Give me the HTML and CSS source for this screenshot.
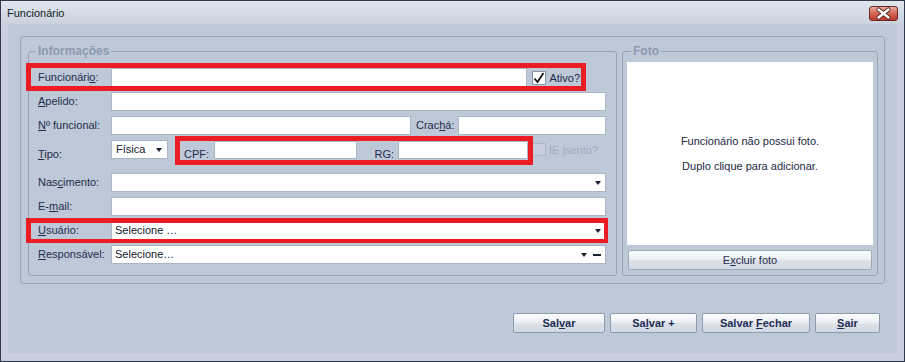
FILE: index.html
```html
<!DOCTYPE html>
<html lang="pt-BR">
<head>
  <meta charset="UTF-8">
  <meta name="viewport" content="width=device-width, initial-scale=1.0">
  <title>Funcionário</title>
  <link rel="stylesheet" href="styles.css">
</head>
<body>
  <div class="window">
    <div class="titlebar">
      <span class="title">Funcionário</span>
      <div class="close">
        <svg width="29" height="15" viewBox="0 0 29 15">
          <defs>
            <linearGradient id="closeGrad" x1="0" y1="0" x2="0" y2="1">
              <stop offset="0" stop-color="#eab3a6"/>
              <stop offset="0.45" stop-color="#d66a58"/>
              <stop offset="1" stop-color="#b9382b"/>
            </linearGradient>
          </defs>
          <rect x="0.5" y="0.5" width="28" height="14" rx="2.5" fill="url(#closeGrad)" stroke="#6e2a26"/>
          <path d="M9.5 3.5 L19.5 11.5 M19.5 3.5 L9.5 11.5" stroke="#5a2420" stroke-width="4.2" stroke-linecap="round"/>
          <path d="M9.5 3.5 L19.5 11.5 M19.5 3.5 L9.5 11.5" stroke="#ffffff" stroke-width="2.4" stroke-linecap="round"/>
        </svg>
      </div>
    </div>

    <div class="client">
      <div class="panel">
        <fieldset class="group info">
          <legend>Informações</legend>
          <div class="rows">
            <div class="row">
              <div class="hl hl-func">
                <span class="lbl">Funcionári<u>o</u>:</span>
                <div class="txt"></div>
                <span class="check on">
                  <svg width="12" height="12" viewBox="0 0 12 12"><path d="M1.5 6.5 L4.5 10 L10.5 1" fill="none" stroke="#111" stroke-width="1.8"/></svg>
                </span>
                <span class="check-text">Ativo?</span>
              </div>
            </div>

            <div class="row">
              <span class="lbl"><u>A</u>pelido:</span>
              <div class="txt"></div>
            </div>

            <div class="row">
              <span class="lbl"><u>N</u>º funcional:</span>
              <div class="txt w-func"></div>
              <span class="lbl lbl-cracha">Crac<u>h</u>á:</span>
              <div class="txt"></div>
            </div>

            <div class="row row-tipo">
              <span class="lbl lbl-bottom"><u>T</u>ipo:</span>
              <div class="txt combo w-tipo">Física<span class="arrow"></span></div>
              <div class="hl cpf">
                <span class="lbl lbl-bottom lbl-cpf">CPF:</span>
                <div class="txt w-cpf"></div>
                <span class="lbl lbl-bottom lbl-rg">RG:</span>
                <div class="txt"></div>
              </div>
              <span class="check off"></span>
              <span class="check-text disabled">IE <u>i</u>sento?</span>
            </div>

            <div class="row">
              <span class="lbl">Nas<u>c</u>imento:</span>
              <div class="txt combo"><span class="arrow"></span></div>
            </div>

            <div class="row">
              <span class="lbl">E-<u>m</u>ail:</span>
              <div class="txt"></div>
            </div>

            <div class="row">
              <div class="hl hl-user">
                <span class="lbl"><u>U</u>suário:</span>
                <div class="txt combo">Selecione …<span class="arrow"></span></div>
              </div>
            </div>

            <div class="row">
              <span class="lbl"><u>R</u>esponsável:</span>
              <div class="txt combo">Selecione…<span class="arrow"></span><span class="minus"></span></div>
            </div>
          </div>
        </fieldset>

        <fieldset class="group foto">
          <legend>Foto</legend>
          <div class="photo">
            <p>Funcionário não possui foto.</p>
            <p>Duplo clique para adicionar.</p>
          </div>
          <div class="btn btn-photo"><span>E<u>x</u>cluir foto</span></div>
        </fieldset>
      </div>

      <div class="actions">
        <div class="btn btn-main w-salvar"><span>Sal<u>v</u>ar</span></div>
        <div class="btn btn-main w-mais"><span>Sa<u>l</u>var +</span></div>
        <div class="btn btn-main w-fechar"><span>Salvar <u>F</u>echar</span></div>
        <div class="btn btn-main w-sair"><span><u>S</u>air</span></div>
      </div>
    </div>
  </div>
</body>
</html>
```

FILE: styles.css
```css
body {
  margin: 0;
  font-family: "Liberation Sans", Arial, sans-serif;
  font-size: 11px;
  color: #1e2b4a;
}
.window {
  width: 905px;
  height: 362px;
  box-sizing: border-box;
  border: 1px solid #2e3a4c;
  background: linear-gradient(#e1e6ed, #c8d1dd 24px, #c7d0dc);
  display: flex;
  flex-direction: column;
}
.titlebar {
  height: 23px;
  display: flex;
  align-items: center;
  padding-left: 6px;
  flex: none;
}
.title {
  color: #141c28;
  flex: 1;
}
.close {
  align-self: flex-start;
  margin-top: 5px;
  margin-right: 6px;
  height: 15px;
}
.client {
  margin: 0 7px 8px 7px;
  flex: 1;
  background: #bec9d8;
  padding: 12px;
}
.panel {
  height: 248px;
  box-sizing: border-box;
  border: 1px solid #9aa6b8;
  border-radius: 3px;
  padding: 7px 6px 7px 7px;
  display: flex;
  gap: 5px;
}
.group {
  margin: 0;
  padding: 0;
  min-inline-size: 0;
  border: 1px solid #98a4b6;
  border-radius: 3px;
  height: 232px;
  box-sizing: border-box;
}
.group legend {
  margin-left: 7px;
  padding: 0 2px;
  font-size: 12px;
  font-weight: bold;
  line-height: 14px;
  color: #8c99ac;
}
.info {
  width: 589px;
  flex: none;
}
.foto {
  flex: 1;
  display: flex;
  flex-direction: column;
}
.foto legend {
  margin-left: 8px;
}
.rows {
  display: flex;
  flex-direction: column;
  gap: 5px;
  padding: 10px 10px 0 9px;
}
.row {
  height: 19px;
  display: flex;
  align-items: center;
}
.row-tipo {
  height: 20px;
  align-items: flex-start;
  margin-bottom: 8px;
}
.lbl {
  width: 73px;
  flex: none;
  line-height: 19px;
  white-space: nowrap;
}
.lbl-bottom {
  align-self: flex-end;
  line-height: 12px;
}
.lbl-cracha {
  width: 42px;
  padding-left: 5px;
}
.lbl-cpf {
  width: 30px;
  padding-left: 4px;
}
.lbl-rg {
  width: 37px;
  padding-right: 4px;
  text-align: right;
}
.txt {
  flex: 1;
  height: 19px;
  box-sizing: border-box;
  background: #fff;
  border: 1px solid #aab5c5;
  padding: 0 4px 0 3px;
  line-height: 17px;
  color: #111a2c;
  display: flex;
  align-items: center;
  white-space: nowrap;
}
.w-func { flex: none; width: 300px; }
.w-tipo { flex: none; width: 57px; padding-left: 4px; }
.w-cpf { flex: none; width: 143px; }
.arrow {
  margin-left: auto;
  width: 0;
  height: 0;
  border-left: 3px solid transparent;
  border-right: 3px solid transparent;
  border-top: 4px solid #1a2232;
}
.minus {
  width: 8px;
  height: 2px;
  background: #1a2232;
  margin-left: 6px;
}
.w-tipo .arrow {
  margin-right: 1px;
}
.hl {
  position: relative;
  display: flex;
  align-items: center;
  height: 19px;
}
.hl::after {
  content: "";
  position: absolute;
  border: 5px solid #ec1c24;
  pointer-events: none;
}
.hl-func {
  width: 542px;
}
.hl-func::after {
  top: -5px;
  left: -12px;
  right: -6px;
  bottom: -4px;
}
.hl-user {
  flex: 1;
}
.hl-user::after {
  top: -3px;
  left: -12px;
  right: -2px;
  bottom: -3px;
  border-width: 5px 4px 4px 5px;
}
.cpf {
  width: 348px;
  margin-left: 12px;
  margin-top: 1px;
  align-items: flex-start;
}
.cpf .txt {
  height: 18px;
}
.cpf::after {
  top: -5px;
  left: -5px;
  right: -5px;
  bottom: -5px;
}
.check {
  width: 14px;
  height: 14px;
  box-sizing: border-box;
  flex: none;
  margin-left: 5px;
  display: flex;
  align-items: center;
  justify-content: center;
}
.check.on {
  background: #fff;
  border: 1px solid #8a97aa;
}
.check.off {
  margin-left: 4px;
  margin-top: 3px;
  width: 14px;
  height: 13px;
  background: #c6cedb;
  border: 1px solid #adb7c6;
}
.check-text {
  margin-left: 3px;
  white-space: nowrap;
}
.check-text.disabled {
  margin-left: 3px;
  color: #9ea9b9;
  align-self: center;
}
.photo {
  margin: 4px 4px 0 4px;
  height: 183px;
  background: #fff;
  display: flex;
  flex-direction: column;
  align-items: center;
  justify-content: center;
  gap: 12px;
  color: #1c2844;
}
.photo p {
  margin: 0;
  line-height: 13px;
}
.btn {
  height: 20px;
  box-sizing: border-box;
  border: 1px solid #8e9aae;
  border-radius: 2px;
  background: linear-gradient(#fbfcfd, #eceff4 45%, #dbe0e8 55%, #d3d9e2);
  display: flex;
  align-items: center;
  justify-content: center;
  color: #1e2b4a;
}
.btn-photo {
  margin: 5px 5px 0 5px;
  border-color: #9ca7b8;
}
.actions {
  display: flex;
  justify-content: flex-end;
  gap: 5px;
  margin-top: 29px;
  padding-right: 5px;
}
.btn-main {
  font-weight: bold;
  color: #1f2d56;
}
.w-salvar { width: 92px; }
.w-mais { width: 87px; }
.w-fechar { width: 108px; }
.w-sair { width: 65px; }
```
